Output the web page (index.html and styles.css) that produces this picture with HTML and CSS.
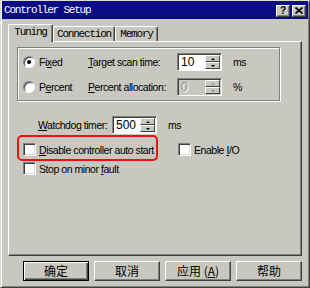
FILE: index.html
```html
<!DOCTYPE html>
<html lang="en">
<head>
    <meta charset="UTF-8">
    <title>Controller Setup</title>
    <link rel="stylesheet" href="styles.css">
</head>
<body>
    <div class="window">
        <div class="titlebar">
            <span class="title">Controller Setup</span>
            <div class="title-btns">
                <span class="tbtn">?</span>
                <span class="tbtn">
                    <svg width="8" height="7" viewBox="0 0 8 7"><path d="M0.5 0.5 L7.5 6.5 M7.5 0.5 L0.5 6.5" stroke="#000" stroke-width="1.6"/></svg>
                </span>
            </div>
        </div>

        <div class="tabs">
            <div class="tab active">Tuning</div>
            <div class="tab tab-conn">Connection</div>
            <div class="tab tab-mem">Memory</div>
        </div>

        <div class="panel">
            <div class="group">
                <div class="opt"><span class="radio checked"></span><span>Fi<u>x</u>ed</span></div>
                <div><u>T</u>arget scan time:</div>
                <div class="spin">
                    <span class="val">10</span>
                    <span class="arrows"><b class="arr"><i class="up"></i></b><b class="arr"><i class="down"></i></b></span>
                </div>
                <div class="unit">ms</div>

                <div class="opt"><span class="radio"></span><span>P<u>e</u>rcent</span></div>
                <div><u>P</u>ercent allocation:</div>
                <div class="spin disabled">
                    <span class="val">0</span>
                    <span class="arrows"><b class="arr"><i class="up"></i></b><b class="arr"><i class="down"></i></b></span>
                </div>
                <div class="unit">%</div>
            </div>

            <div class="watchdog">
                <span class="wd-label"><u>W</u>atchdog timer:</span>
                <div class="spin">
                    <span class="val">500</span>
                    <span class="arrows"><b class="arr"><i class="up"></i></b><b class="arr"><i class="down"></i></b></span>
                </div>
                <span class="unit">ms</span>
            </div>

            <div class="check-row">
                <div class="highlight">
                    <div class="opt"><span class="check"></span><span><u>D</u>isable controller auto start</span></div>
                </div>
                <div class="opt enable"><span class="check"></span><span>Enable <u>I</u>/O</span></div>
            </div>
            <div class="opt stop"><span class="check"></span><span>Stop on minor <u>f</u>ault</span></div>
        </div>

        <div class="buttons">
            <button class="btn default">确定</button>
            <button class="btn">取消</button>
            <button class="btn">应用 (<u>A</u>)</button>
            <button class="btn">帮助</button>
        </div>
    </div>
</body>
</html>
```

FILE: styles.css
```css
* {
    box-sizing: border-box;
}
body {
    margin: 0;
    background-color: #c8c8c0;
    font-family: "Liberation Sans", Arial, sans-serif;
    font-size: 10.5px;
    letter-spacing: -0.45px;
    white-space: nowrap;
    color: #000;
}
.window {
    width: 310px;
    height: 288px;
    border: 1px solid;
    border-color: #dcdcd4 #404040 #404040 #dcdcd4;
    box-shadow: inset 1px 1px #fff, inset -1px -1px #808080;
    padding: 0 1px 1px 1px;
}
.titlebar {
    height: 18px;
    background-color: #0c0c84;
    color: #fff;
    display: flex;
    align-items: center;
    justify-content: space-between;
    padding: 0 2px 0 2px;
}
.title {
    font-family: "Liberation Mono", monospace;
    font-size: 11px;
    letter-spacing: -1.2px;
}
.title-btns {
    display: flex;
    gap: 2px;
    margin-top: 1px;
}
.tbtn {
    width: 14px;
    height: 12px;
    background-color: #c8c8c0;
    border: 1px solid;
    border-color: #fff #404040 #404040 #fff;
    box-shadow: inset -1px -1px #808080;
    color: #000;
    font-weight: bold;
    font-size: 10px;
    line-height: 10px;
    letter-spacing: 0;
    display: flex;
    align-items: center;
    justify-content: center;
}

.tabs {
    display: flex;
    align-items: flex-end;
    height: 17px;
    margin: 5px 0 0 6px;
}
.tab {
    height: 15px;
    border: 1px solid;
    border-bottom: none;
    border-color: #fff #404040 #404040 #fff;
    border-radius: 2px 2px 0 0;
    box-shadow: inset -1px 0 #808080;
    font-family: "Liberation Mono", monospace;
    font-size: 11px;
    letter-spacing: -1.2px;
    text-align: center;
    line-height: 14px;
}
.tab.active {
    width: 45px;
    height: 18px;
    margin-bottom: -1px;
    background-color: #c8c8c0;
    position: relative;
    z-index: 1;
    line-height: 15px;
}
.tab-conn {
    width: 62px;
}
.tab-mem {
    width: 43px;
}

.panel {
    width: 294px;
    height: 215px;
    margin-left: 6px;
    border: 1px solid;
    border-color: #fff #404040 #404040 #fff;
    box-shadow: inset -1px -1px #808080;
    padding: 5px 0 0 8px;
}
.group {
    width: 263px;
    border: 1px solid #808080;
    box-shadow: inset 1px 1px #fff, 1px 1px #fff;
    padding: 5px 0 4px 5px;
    display: grid;
    grid-template-columns: 65px 89px 45px auto;
    grid-auto-rows: 18px;
    row-gap: 7px;
    align-items: center;
}
.unit {
    margin-left: 11px;
}
.opt {
    display: flex;
    align-items: center;
}
.radio {
    width: 12px;
    height: 12px;
    border-radius: 50%;
    background-color: #fff;
    border: 1px solid;
    border-color: #808080 #fff #fff #808080;
    box-shadow: inset 1px 1px #404040;
    margin-right: 4px;
    display: flex;
    align-items: center;
    justify-content: center;
}
.radio.checked::after {
    content: "";
    width: 4px;
    height: 4px;
    border-radius: 50%;
    background-color: #000;
}
.check {
    width: 13px;
    height: 13px;
    background-color: #fff;
    border: 1px solid;
    border-color: #808080 #fff #fff #808080;
    box-shadow: inset 1px 1px #404040, inset -1px -1px #dcdcd4;
    margin-right: 3px;
}

.spin {
    width: 45px;
    height: 18px;
    background-color: #fff;
    border: 1px solid;
    border-color: #808080 #fff #fff #808080;
    box-shadow: inset 1px 1px #404040;
    padding: 1px;
    display: flex;
}
.spin .val {
    flex: 1;
    padding-left: 2px;
    font-size: 12px;
    letter-spacing: 0;
    line-height: 15px;
}
.arrows {
    width: 15px;
    display: flex;
    flex-direction: column;
}
.arr {
    flex: 1;
    background-color: #c8c8c0;
    border: 1px solid;
    border-color: #fff #404040 #404040 #fff;
    display: flex;
    align-items: center;
    justify-content: center;
}
.arr i {
    width: 0;
    height: 0;
    border-left: 2px solid transparent;
    border-right: 2px solid transparent;
}
.arr .up {
    border-bottom: 2px solid #000;
}
.arr .down {
    border-top: 2px solid #000;
}
.spin.disabled {
    background-color: #c8c8c0;
}
.spin.disabled .val {
    color: #909090;
    text-shadow: 1px 1px #fff;
}
.spin.disabled .up {
    border-bottom-color: #909090;
}
.spin.disabled .down {
    border-top-color: #909090;
}

.watchdog {
    display: flex;
    align-items: center;
    height: 18px;
    margin: 15px 0 0 21px;
}
.wd-label {
    width: 74px;
}

.check-row {
    display: flex;
    align-items: flex-start;
    margin-top: 1px;
}
.highlight {
    width: 141px;
    height: 26px;
    border: 2px solid #f01010;
    border-radius: 5px;
    padding: 6px 0 0 4px;
}
.enable {
    margin: 8px 0 0 20px;
}
.stop {
    margin: 1px 0 0 6px;
}

.buttons {
    display: flex;
    gap: 5px;
    margin: 5px 0 0 21px;
}
.btn {
    width: 66px;
    height: 20px;
    padding: 0;
    background-color: #c8c8c0;
    border: 1px solid;
    border-color: #fff #404040 #404040 #fff;
    box-shadow: inset -1px -1px #808080;
    font-family: "Noto Sans CJK SC", sans-serif;
    font-size: 12px;
    letter-spacing: 0;
    line-height: 16px;
    color: #000;
}
.btn.default {
    border-color: #000;
    box-shadow: inset 1px 1px #fff, inset -1px -1px #404040, inset -2px -2px #808080;
}
```
